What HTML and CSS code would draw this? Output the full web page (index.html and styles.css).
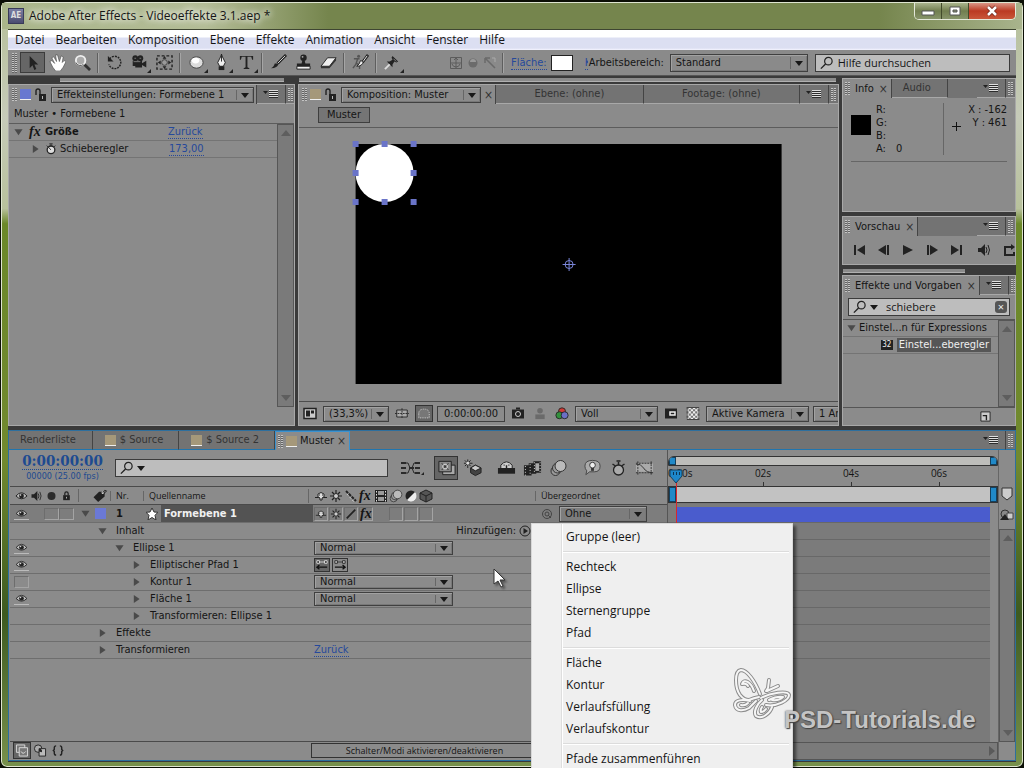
FILE: index.html
```html
<!DOCTYPE html>
<html lang="de">
<head>
    <meta charset="UTF-8">
    <meta name="viewport" content="width=device-width, initial-scale=1.0">
    <title>Adobe After Effects - Videoeffekte 3.1.aep *</title>
    <link rel="stylesheet" href="styles.css">
</head>
<body>
    <!-- Icon symbols -->
    <svg class="symbols" aria-hidden="true">
        <symbol id="i-arrow" viewBox="0 0 18 18"><path d="M6 2v13l3-3 2 5 2-1-2-5h4z" fill="#222"/></symbol>
        <symbol id="i-hand" viewBox="0 0 18 18"><path d="M1 8l2-1 3 3-3-6 2-1 3 5-1-7h2l2 7 2-6 2 1-1 6 2-2 2 1-3 6-3 4H7l-3-4z" fill="#fff" stroke="#444" stroke-width=".6"/></symbol>
        <symbol id="i-zoom" viewBox="0 0 18 18"><path d="M10 10l7 7" stroke="#333" stroke-width="3"/><circle cx="7" cy="7" r="5" fill="#aaa" stroke="#eee" stroke-width="2"/><path d="M2 9a5 5 0 0 0 8 2" fill="none" stroke="#555"/></symbol>
        <symbol id="i-rotate" viewBox="0 0 18 18"><path d="M4 5a6.500 6.500 0 1 1-1 6" fill="none" stroke="#222" stroke-width="1.500" stroke-dasharray="2 1"/><path d="M2 2v6h6z" fill="#222"/></symbol>
        <symbol id="i-camera" viewBox="0 0 20 18"><circle cx="5" cy="4" r="3.4" fill="#222"/><circle cx="11" cy="4" r="3.4" fill="#222"/><path d="M2 7h11v3l5-3v8l-5-3v3H5v-2H2z" fill="#222"/><path d="M3 8h8M4 4h2M10 4h2" stroke="#888"/></symbol>
        <symbol id="i-pan" viewBox="0 0 18 18"><rect x="1" y="2" width="16" height="14" fill="none" stroke="#222" stroke-width="1.500" stroke-dasharray="3 2"/><circle cx="9" cy="9" r="3" fill="#999" stroke="#444"/><path d="M9 2l2 3H7zM9 16l2-3H7zM2 9l3-2v4zM16 9l-3-2v4z" fill="#222"/></symbol>
        <symbol id="i-ellipse" viewBox="0 0 18 18"><ellipse cx="9" cy="9" rx="7" ry="6" fill="#ddd" stroke="#444"/><ellipse cx="8" cy="7" rx="4" ry="3" fill="#fff"/></symbol>
        <symbol id="i-pen" viewBox="0 0 18 18"><path d="M9 0l-1 8M9 0l1 8" stroke="#222"/><path d="M9 1l4 8-2 4H7L5 9z" fill="#eee" stroke="#222"/><path d="M9 2v6" stroke="#222"/><path d="M6 13h6v4H6z" fill="#222"/></symbol>
        <symbol id="i-type" viewBox="0 0 18 18"><path d="M2 2h14v4h-1l-1-3h-4v11l2 1v1H6v-1l2-1V3H4L3 6H2z" fill="#222"/></symbol>
        <symbol id="i-brush" viewBox="0 0 18 18"><path d="M17 1L8 10" stroke="#222" stroke-width="3"/><path d="M16 2l-8 8" stroke="#ddd"/><path d="M9 10q-1 5-8 5 3-1 4-5z" fill="#222"/></symbol>
        <symbol id="i-stamp" viewBox="0 0 18 18"><circle cx="9" cy="4" r="3.4" fill="#222"/><path d="M8 6h2l1 4h5v3H2v-3h5z" fill="#222"/><path d="M2 13h14v3H2z" fill="#eee" stroke="#222"/><circle cx="8" cy="3" r="1" fill="#aaa"/></symbol>
        <symbol id="i-eraser" viewBox="0 0 18 18"><path d="M8 4h9l-7 9H1z" fill="#eee" stroke="#222"/><path d="M1 13v2h9l7-8V4l-7 9z" fill="#333"/></symbol>
        <symbol id="i-roto" viewBox="0 0 18 18"><path d="M2 5h6M6 5l-2 6-3 4M5 10l3 2v4" stroke="#555" stroke-width="1.500" fill="none"/><circle cx="7" cy="2.500" r="1.600" fill="#555"/><path d="M17 1l-6 8" stroke="#222" stroke-width="3"/><path d="M16 2l-5 7" stroke="#eee"/><path d="M12 8q-1 5-7 5 3-2 4-6z" fill="#eee" stroke="#222"/></symbol>
        <symbol id="i-pin" viewBox="0 0 18 18"><path d="M9 2l6 6-2 1-2-1-2 3v3L3 8h3l3-2-1-2z" fill="#222"/><path d="M6 11l-5 5" stroke="#ddd" stroke-width="2"/><path d="M10 5l3 3" stroke="#888"/></symbol>
        <symbol id="i-anchor" viewBox="0 0 16 16"><path d="M2.500 2.500h11v11h-11zM8 3v10M3 8h10M4 9q1 3 4 3t4-3M6 5l2-2 2 2" fill="none" stroke="#5c5c5c"/></symbol>
        <symbol id="i-ball" viewBox="0 0 16 16"><circle cx="8" cy="8" r="4.500" fill="#6b6b6b"/><path d="M5 7a3 3 0 0 1 6 0z" fill="#999"/></symbol>
        <symbol id="i-axis" viewBox="0 0 16 16"><path d="M4 4l9 9M3 3h5M3 3v5" fill="none" stroke="#6a6a6a" stroke-width="1.500"/><path d="M10 3h3v4" fill="none" stroke="#aaa"/></symbol>
        <symbol id="i-search" viewBox="0 0 16 14"><circle cx="10" cy="5" r="4" fill="none" stroke="#222" stroke-width="1.3"/><path d="M7 8l-5 5" stroke="#222" stroke-width="1.500"/></symbol>
        <symbol id="i-lock-open" viewBox="0 0 14 14"><path d="M2 7V3q0-2 2-2t2 2v4" fill="none" stroke="#222" stroke-width="1.4"/><rect x="5" y="6" width="7" height="7" fill="#222"/><rect x="8" y="8" width="1" height="3" fill="#bbb"/></symbol>
        <symbol id="i-menu" viewBox="0 0 16 10"><path d="M0 2h5L2.500 5z" fill="#222"/><path d="M6 1.500h9M6 3.500h9M6 5.500h9M6 7.500h9" stroke="#dedede"/><path d="M6 2.500h9M6 4.500h9M6 6.500h9M6 8.500h9" stroke="#2c2c2c"/></symbol>
        <symbol id="i-watch" viewBox="0 0 14 14"><circle cx="7" cy="8" r="4.500" fill="#ddd" stroke="#222" stroke-width="1.500"/><path d="M7 8L4 5M5 1h4M7 1v3M2 3l2 2M12 3l-2 2" stroke="#222"/></symbol>
        <symbol id="i-eye" viewBox="0 0 14 10"><path d="M1 5q6-7 12 0-6 6-12 0z" fill="#bbb" stroke="#222"/><circle cx="7" cy="5" r="2.600" fill="#222"/><circle cx="6" cy="4" r=".8" fill="#eee"/></symbol>
        <symbol id="i-speaker" viewBox="0 0 14 12"><path d="M1 4h3l4-4v12L4 8H1z" fill="#222"/><path d="M9 3q2 3 0 6M11 1q3 5 0 10" fill="none" stroke="#222"/></symbol>
        <symbol id="i-dot" viewBox="0 0 10 10"><circle cx="5" cy="5" r="4" fill="#2c2c2c"/></symbol>
        <symbol id="i-lock" viewBox="0 0 10 12"><path d="M3 5V3q0-2 2-2t2 2v2" fill="none" stroke="#222" stroke-width="1.500"/><rect x="1" y="5" width="8" height="6" fill="#222"/><path d="M5 7v2" stroke="#ccc"/></symbol>
        <symbol id="i-tag" viewBox="0 0 16 14"><path d="M1 9l6-6h6v5l-7 6z" fill="#222"/><circle cx="11" cy="4" r="1.300" fill="#ddd"/><path d="M11 4q2-4 4-2-1 2-3 3" fill="none" stroke="#222"/></symbol>
        <symbol id="i-shy" viewBox="0 0 14 12"><path d="M1 7.500h12" stroke="#222"/><path d="M4 7V4q3-3 6 0v3l-2 1v2H6V8z" fill="#ddd" stroke="#222"/><path d="M5 5h1M8 5h1" stroke="#222"/></symbol>
        <symbol id="i-sun" viewBox="0 0 14 14"><circle cx="7" cy="7" r="2.500" fill="#ccc" stroke="#222"/><path d="M7 1v3M7 10v3M1 7h3M10 7h3M3 3l2 2M9 9l2 2M11 3L9 5M5 9l-2 2" stroke="#222" stroke-width="1.200"/></symbol>
        <symbol id="i-quality" viewBox="0 0 14 14"><path d="M2 2l10 10" stroke="#222" stroke-width="2" stroke-dasharray="3 1"/><path d="M3 5l7 8" stroke="#ccc" stroke-dasharray="2 2"/></symbol>
        <symbol id="i-slash" viewBox="0 0 14 14"><path d="M2 12L12 2" stroke="#222" stroke-width="2"/></symbol>
        <symbol id="i-film" viewBox="0 0 14 14"><path d="M1 1h12v12H1z" fill="#222"/><path d="M4 2h6v4H4zM4 8h6v4H4z" fill="#999"/><path d="M2.500 2v11M11.500 2v11" stroke="#ddd" stroke-dasharray="1.500 1.500"/></symbol>
        <symbol id="i-blur" viewBox="0 0 18 18"><circle cx="6" cy="12" r="4.500" fill="#999" stroke="#333"/><circle cx="8" cy="9" r="5" fill="#999" stroke="#333"/><circle cx="11" cy="7" r="5.500" fill="#bbb" stroke="#333"/></symbol>
        <symbol id="i-half" viewBox="0 0 14 14"><circle cx="7" cy="7" r="5.500" fill="#222"/><path d="M11 3a5.500 5.500 0 0 1-8 8z" fill="#eee"/></symbol>
        <symbol id="i-cube" viewBox="0 0 14 14"><path d="M7 1l6 3v6l-6 3-6-3V4z" fill="#555" stroke="#222"/><path d="M1 4l6 3 6-3M7 7v6" fill="none" stroke="#222"/></symbol>
        <symbol id="i-flow" viewBox="0 0 24 14"><path d="M1 1h5v2H1zM1 6h5v2H1zM1 11h5v2H1zM15 1h5v2h-5zM15 6h5v2h-5zM15 11h5v2h-5z" fill="#2a2a2a"/><path d="M6 2h2l2 5-2 5H6M15 2h-1l-2 5 2 5h1" stroke="#2a2a2a" fill="none"/><path d="M9 6h5v2H9z" fill="#2a2a2a"/><path d="M21 14h3v-3z" fill="#222"/></symbol>
        <symbol id="i-live" viewBox="0 0 20 18"><path d="M6 6h13v10H6z" fill="#aaa" stroke="#222"/><path d="M2 2h13v11H2z" fill="#888" stroke="#222"/><path d="M5 4l7 7M12 4l-7 7" stroke="#222"/><circle cx="8.500" cy="7.500" r="2.500" fill="none" stroke="#ddd"/></symbol>
        <symbol id="i-draft" viewBox="0 0 20 18"><path d="M13 6l6 3v5l-6 3-5-3V9z" fill="#444" stroke="#222"/><path d="M8 9l5 3 6-3-6-3z" fill="#ccc" stroke="#222"/><path d="M5 0v9M1 4h9M2 1l6 6M8 1L2 7" stroke="#222"/><circle cx="5" cy="4" r="1.500" fill="#ddd"/></symbol>
        <symbol id="i-shyman" viewBox="0 0 20 18"><path d="M1 9h18v6H1z" fill="#222"/><path d="M4 9V6q6-7 12 0v3" fill="#ccc" stroke="#222"/><path d="M10 6v5M7 6h1M12 6h1" stroke="#222" stroke-width="1.500"/></symbol>
        <symbol id="i-frames" viewBox="0 0 20 18"><path d="M1 6h8v11H1zM6 4h8v11H6zM11 2h8v12h-8z" fill="#222"/><path d="M13 4h4v8h-4z" fill="#aaa"/><path d="M2.500 7v10M7.500 5v10M12 3v11M18 3v11" stroke="#ddd" stroke-dasharray="1 2"/></symbol>
        <symbol id="i-brain" viewBox="0 0 20 18"><path d="M2 7q0-6 8-6t8 6-6 6H7L3 16l1-4Q2 10 2 7z" fill="#aaa" stroke="#444"/><circle cx="10" cy="6" r="3" fill="#eee" stroke="#333"/><path d="M8.500 9h3v3h-3z" fill="#333"/></symbol>
        <symbol id="i-autokey" viewBox="0 0 16 18"><circle cx="8" cy="11" r="5" fill="#aaa" stroke="#222" stroke-width="1.300"/><path d="M8 3v3M6 2h4M2 5l3 2M14 5l-3 2" stroke="#222" stroke-width="1.500"/></symbol>
        <symbol id="i-graph" viewBox="0 0 20 16"><path d="M1 3h18v9H1z" fill="#aaa"/><path d="M1 3h18M1 13h18M3 1v14M17 1v14" stroke="#333" stroke-dasharray="2 1"/><path d="M1 4q5-1 8 4t10 5" fill="none" stroke="#333"/></symbol>
        <symbol id="i-star" viewBox="0 0 12 12"><path d="M6 0l2 4 4 .3-3 3L10 12 6 9.500 2 12l1-4.700-3-3L4 4z" fill="#fff" stroke="#333"/></symbol>
        <symbol id="i-swirl" viewBox="0 0 12 12"><circle cx="6" cy="6" r="4.500" fill="none" stroke="#444"/><circle cx="6" cy="6" r="2" fill="none" stroke="#444"/><path d="M7 7l3 3" stroke="#444"/></symbol>
        <symbol id="i-play" viewBox="0 0 12 12"><circle cx="6" cy="6" r="5" fill="none" stroke="#222"/><path d="M4.500 3v6L9 6z" fill="#222"/></symbol>
        <symbol id="i-path-l" viewBox="0 0 16 14"><path d="M4 3.500h8" stroke="#ddd"/><path d="M2 9.500h12M5 7L2 9.500 5 12" fill="none" stroke="#111" stroke-width="1.500"/><path d="M2 2h3v3H2zM11 2h3v3h-3z" fill="#222" stroke="#eee"/></symbol>
        <symbol id="i-path-r" viewBox="0 0 16 14"><path d="M4 3.500h8" stroke="#333"/><path d="M2 9.500h12M11 7l3 2.500L11 12" fill="none" stroke="#111" stroke-width="1.500"/><path d="M2 2h3v3H2zM11 2h3v3h-3z" fill="#ccc" stroke="#222"/></symbol>
        <symbol id="i-first" viewBox="0 0 14 12"><path d="M2 1v10" stroke="#222" stroke-width="2"/><path d="M12 1v10L4 6z" fill="#222"/></symbol>
        <symbol id="i-back" viewBox="0 0 14 12"><path d="M11 1v10" stroke="#222" stroke-width="2"/><path d="M9 1v10L1 6z" fill="#222"/></symbol>
        <symbol id="i-run" viewBox="0 0 14 12"><path d="M2 1v10l10-5z" fill="#222"/></symbol>
        <symbol id="i-loop" viewBox="0 0 14 12"><path d="M9 3H2v8h9V8" fill="none" stroke="#222" stroke-width="2"/><path d="M8 0v6l4-3z" fill="#222"/></symbol>
        <symbol id="i-new" viewBox="0 0 12 12"><path d="M1 1h10v10H1z" fill="#ccc" stroke="#222"/><path d="M3 5h4v5" fill="none" stroke="#222" stroke-width="1.500"/></symbol>
        <symbol id="i-magnify" viewBox="0 0 14 12"><path d="M1 1h12v10H1z" fill="#ccc" stroke="#222" stroke-width="1.500"/><path d="M3 3h4v6H3zM8 3h3v3H8z" fill="#222"/></symbol>
        <symbol id="i-guides" viewBox="0 0 16 12"><path d="M2 2h12v8H2z" fill="#aaa" stroke="#222"/><path d="M8 0v12M0 6h16" stroke="#222" stroke-dasharray="2 1"/></symbol>
        <symbol id="i-mask" viewBox="0 0 16 12"><path d="M2 6q0-5 6-5t6 5v5H2z" fill="#777" stroke="#ddd" stroke-dasharray="1 1"/></symbol>
        <symbol id="i-snap" viewBox="0 0 14 12"><path d="M1 2h12v9H1z" fill="#222"/><circle cx="7" cy="6.500" r="2.500" fill="#222" stroke="#ccc"/><path d="M5 0h4v2H5z" fill="#222"/></symbol>
        <symbol id="i-person" viewBox="0 0 12 14"><circle cx="6" cy="4" r="3" fill="#6a6a6a"/><path d="M1 8h10v5H1z" fill="#6a6a6a"/></symbol>
        <symbol id="i-rgb" viewBox="0 0 16 14"><circle cx="8" cy="4.500" r="4" fill="#d03a35" stroke="#222"/><circle cx="5" cy="9" r="4" fill="#33903d" stroke="#222"/><circle cx="11" cy="9" r="4" fill="#6b6fc5" stroke="#222"/></symbol>
        <symbol id="i-region" viewBox="0 0 14 12"><path d="M1 1h12v10H1z" fill="#222"/><path d="M6 4.500h5v3H6z" fill="#222" stroke="#eee" stroke-width="1.500"/></symbol>
        <symbol id="i-alpha" viewBox="0 0 12 12"><path d="M0 0h12v12H0z" fill="#eee"/><path d="M0 1h12M0 5h12M0 9h12" stroke="#777" stroke-width="2" stroke-dasharray="2 2"/><path d="M2 3h10M2 7h10M2 11h10" stroke="#777" stroke-width="2" stroke-dasharray="2 2"/><path d="M.5.500h11v11H.5z" fill="none" stroke="#444"/></symbol>
        <symbol id="i-marker" viewBox="0 0 12 14"><path d="M1 1h10v8l-5 4-5-4z" fill="#ccc" stroke="#333"/></symbol>
        <symbol id="i-comp" viewBox="0 0 14 14"><circle cx="5" cy="6" r="4" fill="#888" stroke="#333"/><path d="M7 5h6v6H7z" fill="#ccc" stroke="#444"/><path d="M0 12l5-6 4 6z" fill="#222"/></symbol>
        <symbol id="i-stack" viewBox="0 0 14 14"><path d="M1 1h9v8H1z" fill="#777" stroke="#ddd"/><path d="M4 4h9v9H4z" fill="#777" stroke="#ddd"/><path d="M6 8q2 4 5 0" fill="none" stroke="#ddd"/></symbol>
        <symbol id="i-modes" viewBox="0 0 14 14"><circle cx="5" cy="5" r="4" fill="#aaa" stroke="#222"/><path d="M6 5h7v8H6z" fill="#bbb" stroke="#222"/><path d="M6 5q4 0 3 4l-3-1z" fill="#222"/></symbol>
        <symbol id="i-braces" viewBox="0 0 14 14"><path d="M5 2q-2 0-2 2v2L2 7l1 1v2q0 2 2 2M9 2q2 0 2 2v2l1 1-1 1v2q0 2-2 2" fill="none" stroke="#222" stroke-width="1.500"/></symbol>
    </svg>

    <div class="window">
        <header class="titlebar">
            <span class="app-icon">AE</span>
            <h1>Adobe After Effects - Videoeffekte 3.1.aep *</h1>
            <div class="window-buttons">
                <button type="button" aria-label="Minimieren"><svg viewBox="0 0 14 12"><path d="M1 6h12v4H1z" fill="#fff" stroke="#555"/></svg></button>
                <button type="button" aria-label="Maximieren"><svg viewBox="0 0 14 12"><path d="M2 2h10v8H2z" fill="#fff" stroke="#555"/><path d="M5 5h4v2H5z" fill="#8a9372" stroke="#555"/></svg></button>
                <button type="button" class="close" aria-label="Schließen"><svg viewBox="0 0 14 12"><path d="M3 2l8 8M11 2l-8 8" stroke="#6b2418" stroke-width="4"/><path d="M3 2l8 8M11 2l-8 8" stroke="#fff" stroke-width="2.500"/></svg></button>
            </div>
        </header>

        <div class="client">
            <nav class="menubar">
                <a href="#">Datei</a>
                <a href="#">Bearbeiten</a>
                <a href="#">Komposition</a>
                <a href="#">Ebene</a>
                <a href="#">Effekte</a>
                <a href="#">Animation</a>
                <a href="#">Ansicht</a>
                <a href="#">Fenster</a>
                <a href="#">Hilfe</a>
            </nav>

            <div class="toolbar">
                <span class="grip"></span>
                <button type="button" class="tool active" aria-label="Auswahl"><svg><use href="#i-arrow"/></svg></button>
                <button type="button" class="tool" aria-label="Hand"><svg><use href="#i-hand"/></svg></button>
                <button type="button" class="tool" aria-label="Zoom"><svg><use href="#i-zoom"/></svg></button>
                <span class="tool-sep"></span>
                <button type="button" class="tool" aria-label="Drehen"><svg><use href="#i-rotate"/></svg></button>
                <button type="button" class="tool more" aria-label="Kamera"><svg><use href="#i-camera"/></svg></button>
                <button type="button" class="tool" aria-label="Ausschnitt"><svg><use href="#i-pan"/></svg></button>
                <span class="tool-sep"></span>
                <button type="button" class="tool more" aria-label="Ellipse"><svg><use href="#i-ellipse"/></svg></button>
                <button type="button" class="tool more" aria-label="Zeichenstift"><svg><use href="#i-pen"/></svg></button>
                <button type="button" class="tool more" aria-label="Text"><svg><use href="#i-type"/></svg></button>
                <span class="tool-sep"></span>
                <button type="button" class="tool" aria-label="Pinsel"><svg><use href="#i-brush"/></svg></button>
                <button type="button" class="tool" aria-label="Kopierstempel"><svg><use href="#i-stamp"/></svg></button>
                <button type="button" class="tool" aria-label="Radiergummi"><svg><use href="#i-eraser"/></svg></button>
                <span class="tool-sep"></span>
                <button type="button" class="tool" aria-label="Roto-Pinsel"><svg><use href="#i-roto"/></svg></button>
                <span class="tool-sep"></span>
                <button type="button" class="tool more" aria-label="Marionette"><svg><use href="#i-pin"/></svg></button>
                <div class="axis-tools">
                    <svg><use href="#i-anchor"/></svg>
                    <svg><use href="#i-ball"/></svg>
                    <svg><use href="#i-axis"/></svg>
                </div>
                <span class="tool-sep"></span>
                <a href="#" class="link">Fläche:</a>
                <button type="button" class="fill-color" aria-label="Flächenfarbe"></button>
                <a href="#" class="link cut">Kontur:</a>
                <label for="workspace">Arbeitsbereich:</label>
                <span class="select workspace">
                    <select id="workspace"><option>Standard</option></select>
                </span>
                <div class="search help-search">
                    <svg><use href="#i-search"/></svg>
                    <input type="text" aria-label="Hilfe durchsuchen" value="Hilfe durchsuchen">
                </div>
            </div>

            <main class="upper">
                <!-- Effect controls -->
                <section class="column">
                    <div class="strip strip-left"></div>
                    <div class="panel">
                        <div class="tabs">
                            <div class="tab current">
                                <span class="grip"></span>
                                <span class="chip blue"></span>
                                <svg class="lock"><use href="#i-lock-open"/></svg>
                                <span class="select effect-select">
                                    <select aria-label="Effekteinstellungen"><option>Effekteinstellungen: Formebene 1</option></select>
                                </span>
                            </div>
                            <button type="button" class="panel-menu" aria-label="Menü"><svg><use href="#i-menu"/></svg></button>
                            <span class="tab-end"><span class="grip"></span></span>
                        </div>
                        <p class="source-line">Muster • Formebene 1</p>
                        <div class="effect-body">
                            <div class="effect-list">
                                <div class="effect-row">
                                    <span class="twirl open"></span>
                                    <i class="fx">fx</i>
                                    <b>Größe</b>
                                    <a href="#" class="link">Zurück</a>
                                </div>
                                <div class="effect-row child">
                                    <span class="twirl"></span>
                                    <svg><use href="#i-watch"/></svg>
                                    <span class="effect-name">Schieberegler</span>
                                    <a href="#" class="link">173,00</a>
                                </div>
                            </div>
                            <div class="scrollbar"></div>
                        </div>
                    </div>
                </section>

                <!-- Composition viewer -->
                <section class="column">
                    <div class="strip"></div>
                    <div class="panel">
                        <div class="tabs">
                            <div class="tab current">
                                <span class="grip"></span>
                                <span class="chip sand"></span>
                                <svg class="lock"><use href="#i-lock-open"/></svg>
                                <span class="select comp-select">
                                    <select aria-label="Komposition"><option>Komposition: Muster</option></select>
                                </span>
                                <button type="button" class="tab-close" aria-label="Schließen">×</button>
                            </div>
                            <button type="button" class="tab wide">Ebene: (ohne)</button>
                            <button type="button" class="tab wide">Footage: (ohne)</button>
                            <button type="button" class="panel-menu" aria-label="Menü"><svg><use href="#i-menu"/></svg></button>
                            <span class="tab-end"><span class="grip"></span></span>
                        </div>
                        <div class="crumbs"><button type="button">Muster</button></div>
                        <div class="viewer">
                            <svg viewBox="0 0 426 240">
                                <rect width="426" height="240" fill="#000"/>
                                <circle cx="29" cy="29" r="29" fill="#fff"/>
                                <g fill="#6a74c8">
                                    <rect x="-3" y="-3" width="6" height="6"/><rect x="26" y="-3" width="6" height="6"/><rect x="55" y="-3" width="6" height="6"/>
                                    <rect x="-3" y="26" width="6" height="6"/><rect x="55" y="26" width="6" height="6"/>
                                    <rect x="-3" y="55" width="6" height="6"/><rect x="26" y="55" width="6" height="6"/><rect x="55" y="55" width="6" height="6"/>
                                </g>
                                <g fill="none" stroke="#7a85d8"><circle cx="213.500" cy="120.500" r="4"/><path d="M213.500 114v13M207 120.500h13"/></g>
                            </svg>
                        </div>
                        <div class="viewer-bar">
                            <button type="button" class="icon-button" aria-label="Vorschau"><svg><use href="#i-magnify"/></svg></button>
                            <span class="select zoom-select"><select aria-label="Zoom"><option>(33,3%)</option></select></span>
                            <button type="button" class="icon-button" aria-label="Hilfslinien"><svg><use href="#i-guides"/></svg></button>
                            <button type="button" class="icon-button pressed" aria-label="Masken"><svg><use href="#i-mask"/></svg></button>
                            <button type="button" class="time-button">0:00:00:00</button>
                            <button type="button" class="icon-button" aria-label="Schnappschuss"><svg><use href="#i-snap"/></svg></button>
                            <button type="button" class="icon-button" aria-label="Schnappschuss anzeigen"><svg><use href="#i-person"/></svg></button>
                            <button type="button" class="icon-button" aria-label="Kanäle"><svg><use href="#i-rgb"/></svg></button>
                            <span class="select quality-select"><select aria-label="Auflösung"><option>Voll</option></select></span>
                            <button type="button" class="icon-button" aria-label="Bereich"><svg><use href="#i-region"/></svg></button>
                            <button type="button" class="icon-button" aria-label="Transparenz"><svg><use href="#i-alpha"/></svg></button>
                            <span class="select camera-select"><select aria-label="Kamera"><option>Aktive Kamera</option></select></span>
                            <span class="select views-select"><select aria-label="Ansichten"><option>1 Ansicht</option></select></span>
                        </div>
                    </div>
                </section>

                <aside class="side">
                    <!-- Info -->
                    <section class="panel info">
                        <div class="tabs">
                            <button type="button" class="tab current"><span class="grip"></span>Info <span class="x">×</span></button>
                            <button type="button" class="tab audio">Audio</button>
                            <button type="button" class="panel-menu" aria-label="Menü"><svg><use href="#i-menu"/></svg></button>
                            <span class="tab-end"><span class="grip"></span></span>
                        </div>
                        <div class="info-body">
                            <span class="info-color"></span>
                            <dl class="channels">
                                <dt>R:</dt><dd></dd>
                                <dt>G:</dt><dd></dd>
                                <dt>B:</dt><dd></dd>
                                <dt>A:</dt><dd>0</dd>
                            </dl>
                            <svg class="cross" viewBox="0 0 9 9"><path d="M4.500 0v9M0 4.500h9" stroke="#111"/></svg>
                            <p class="coords">X : -162<br>Y : 461</p>
                        </div>
                    </section>

                    <!-- Preview -->
                    <section class="panel">
                        <div class="tabs">
                            <button type="button" class="tab current"><span class="grip"></span>Vorschau <span class="x">×</span></button>
                            <button type="button" class="panel-menu" aria-label="Menü"><svg><use href="#i-menu"/></svg></button>
                            <span class="tab-end"><span class="grip"></span></span>
                        </div>
                        <div class="transport">
                            <button type="button" aria-label="Erster Frame"><svg><use href="#i-first"/></svg></button>
                            <button type="button" aria-label="Zurück"><svg><use href="#i-back"/></svg></button>
                            <button type="button" aria-label="Abspielen"><svg><use href="#i-run"/></svg></button>
                            <button type="button" class="flip" aria-label="Vor"><svg><use href="#i-back"/></svg></button>
                            <button type="button" class="flip" aria-label="Letzter Frame"><svg><use href="#i-first"/></svg></button>
                            <button type="button" class="sound" aria-label="Ton"><svg><use href="#i-speaker"/></svg></button>
                            <button type="button" aria-label="Schleife"><svg><use href="#i-loop"/></svg></button>
                        </div>
                    </section>
                    <div class="strip strip-side"></div>

                    <!-- Effects and presets -->
                    <section class="panel presets">
                        <div class="tabs">
                            <button type="button" class="tab current"><span class="grip"></span>Effekte und Vorgaben <span class="x">×</span></button>
                            <button type="button" class="panel-menu" aria-label="Menü"><svg><use href="#i-menu"/></svg></button>
                            <span class="tab-end"><span class="grip"></span></span>
                        </div>
                        <div class="search preset-search">
                            <svg><use href="#i-search"/></svg>
                            <span class="down"></span>
                            <input type="text" aria-label="Effekte suchen" value="schiebere">
                            <button type="button" class="clear" aria-label="Löschen">×</button>
                        </div>
                        <div class="preset-body">
                            <div class="preset-list">
                                <div class="preset-row"><span class="twirl open"></span>Einstel...n für Expressions</div>
                                <div class="preset-row selected"><span class="bit-icon">32</span><span class="preset-name">Einstel...eberegler</span></div>
                            </div>
                            <div class="scrollbar"></div>
                        </div>
                        <div class="preset-foot"><svg><use href="#i-new"/></svg></div>
                    </section>
                </aside>
            </main>

            <!-- Timeline -->
            <section class="timeline">
                <div class="tabs timeline-tabs">
                    <button type="button" class="tab queue">Renderliste</button>
                    <button type="button" class="tab source"><span class="chip sand"></span>$ Source</button>
                    <button type="button" class="tab source"><span class="chip sand"></span>$ Source 2</button>
                    <button type="button" class="tab current"><span class="grip"></span><span class="chip sand"></span>Muster <span class="x">×</span></button>
                    <button type="button" class="panel-menu" aria-label="Menü"><svg><use href="#i-menu"/></svg></button>
                    <span class="tab-end"><span class="grip"></span></span>
                </div>

                <div class="timeline-body">
                    <div class="outline">
                        <div class="outline-head">
                            <div class="timecode">
                                <a href="#">0:00:00:00</a>
                                <small>00000 (25.00 fps)</small>
                            </div>
                            <div class="search layer-search">
                                <svg><use href="#i-search"/></svg>
                                <span class="down"></span>
                                <input type="text" aria-label="Ebenen suchen">
                            </div>
                            <div class="comp-switches">
                                <button type="button" class="flow" aria-label="Flussdiagramm"><svg><use href="#i-flow"/></svg></button>
                                <button type="button" class="pressed" aria-label="Live-Aktualisierung"><svg><use href="#i-live"/></svg></button>
                                <button type="button" aria-label="3D-Entwurf"><svg><use href="#i-draft"/></svg></button>
                                <button type="button" class="spaced" aria-label="Tarnen"><svg><use href="#i-shyman"/></svg></button>
                                <button type="button" aria-label="Frame-Überblendung"><svg><use href="#i-frames"/></svg></button>
                                <button type="button" aria-label="Bewegungsunschärfe"><svg><use href="#i-blur"/></svg></button>
                                <button type="button" class="spaced" aria-label="Brainstorming"><svg><use href="#i-brain"/></svg></button>
                                <button type="button" aria-label="Auto-Keyframe"><svg><use href="#i-autokey"/></svg></button>
                                <button type="button" aria-label="Diagrammeditor"><svg><use href="#i-graph"/></svg></button>
                            </div>
                        </div>

                        <div class="row layer-grid column-head">
                            <span class="av"><svg><use href="#i-eye"/></svg><svg><use href="#i-speaker"/></svg><svg><use href="#i-dot"/></svg><svg><use href="#i-lock"/></svg></span>
                            <span class="label-cell"><svg><use href="#i-tag"/></svg></span>
                            <span>Nr.</span>
                            <span>Quellenname</span>
                            <span class="switches"><svg><use href="#i-shy"/></svg><svg><use href="#i-sun"/></svg><svg><use href="#i-quality"/></svg><i class="fx">fx</i><svg><use href="#i-film"/></svg><svg><use href="#i-blur"/></svg><svg><use href="#i-half"/></svg><svg><use href="#i-cube"/></svg></span>
                            <span class="parent-head">Übergeordnet</span>
                        </div>
                        <div class="row layer-grid layer-row">
                            <span class="av"><svg class="eye"><use href="#i-eye"/></svg><span class="gap"></span><span class="box"></span><span class="box"></span></span>
                            <span class="label-cell"><span class="twirl open"></span><span class="label-color"></span></span>
                            <b class="number">1</b>
                            <span class="layer-name"><svg><use href="#i-star"/></svg><b>Formebene 1</b></span>
                            <span class="switches"><svg class="box"><use href="#i-shy"/></svg><svg class="box"><use href="#i-sun"/></svg><svg class="box"><use href="#i-slash"/></svg><i class="fx box">fx</i><span class="gap"></span><span class="box"></span><span class="box"></span><span class="box"></span></span>
                            <span class="parent"><svg><use href="#i-swirl"/></svg><span class="select parent-select"><select aria-label="Übergeordnet"><option>Ohne</option></select></span></span>
                        </div>
                        <div class="row tree-grid">
                            <span></span>
                            <span class="depth-1"><span class="twirl open"></span>Inhalt</span>
                            <span class="add">Hinzufügen: <button type="button" aria-label="Hinzufügen"><svg><use href="#i-play"/></svg></button></span>
                        </div>
                        <div class="row tree-grid">
                            <span class="av"><svg class="eye"><use href="#i-eye"/></svg></span>
                            <span class="depth-2"><span class="twirl open"></span>Ellipse 1</span>
                            <span class="mode"><span class="select"><select aria-label="Modus Ellipse 1"><option>Normal</option></select></span></span>
                        </div>
                        <div class="row tree-grid">
                            <span class="av"><svg class="eye"><use href="#i-eye"/></svg></span>
                            <span class="depth-3"><span class="twirl"></span>Elliptischer Pfad 1</span>
                            <span class="mode path-buttons"><button type="button" class="pressed" aria-label="Pfad umkehren"><svg><use href="#i-path-l"/></svg></button><button type="button" aria-label="Pfadrichtung"><svg><use href="#i-path-r"/></svg></button></span>
                        </div>
                        <div class="row tree-grid">
                            <span class="av"><span class="box"></span></span>
                            <span class="depth-3"><span class="twirl"></span>Kontur 1</span>
                            <span class="mode"><span class="select"><select aria-label="Modus Kontur 1"><option>Normal</option></select></span></span>
                        </div>
                        <div class="row tree-grid">
                            <span class="av"><svg class="eye"><use href="#i-eye"/></svg></span>
                            <span class="depth-3"><span class="twirl"></span>Fläche 1</span>
                            <span class="mode"><span class="select"><select aria-label="Modus Fläche 1"><option>Normal</option></select></span></span>
                        </div>
                        <div class="row tree-grid">
                            <span></span>
                            <span class="depth-3"><span class="twirl"></span>Transformieren: Ellipse 1</span>
                        </div>
                        <div class="row tree-grid">
                            <span></span>
                            <span class="depth-1"><span class="twirl"></span>Effekte</span>
                        </div>
                        <div class="row tree-grid">
                            <span></span>
                            <span class="depth-1"><span class="twirl"></span>Transformieren</span>
                            <span class="mode"><a href="#" class="link">Zurück</a></span>
                        </div>
                        <div class="outline-foot">
                            <button type="button" class="icon-button pressed" aria-label="Schalter"><svg><use href="#i-stack"/></svg></button>
                            <button type="button" class="icon-button" aria-label="Modi"><svg><use href="#i-modes"/></svg></button>
                            <button type="button" class="icon-button" aria-label="In/Out"><svg><use href="#i-braces"/></svg></button>
                            <button type="button" class="toggle-modes">Schalter/Modi aktivieren/deaktivieren</button>
                        </div>
                    </div>

                    <div class="time-area">
                        <div class="tracks-column">
                            <div class="navigator"><span></span><span></span></div>
                            <div class="ruler">
                                <span>0:00s</span>
                                <span>02s</span>
                                <span>04s</span>
                                <span>06s</span>
                            </div>
                            <div class="work-area"><span></span><span></span></div>
                            <div class="track bar-track"><div class="layer-bar"></div></div>
                            <div class="track"></div>
                            <div class="track"></div>
                            <div class="track"></div>
                            <div class="track"></div>
                            <div class="track"></div>
                            <div class="track"></div>
                            <div class="track"></div>
                            <div class="track"></div>
                            <div class="track-rest"></div>
                            <div class="hscroll"></div>
                            <svg class="playhead" viewBox="0 0 14 54"><path d="M7.500 12v42" stroke="#d8262c"/><path d="M1 1h12v6l-6 7-6-7z" fill="#1d87c9" stroke="#14405e"/><path d="M4.500 3v3M7.500 3v3M10.500 3v3" stroke="#0e3450"/></svg>
                        </div>
                        <div class="time-side">
                            <svg><use href="#i-marker"/></svg>
                            <svg><use href="#i-comp"/></svg>
                            <div class="scrollbar"></div>
                        </div>
                    </div>
                </div>
            </section>
        </div>
    </div>

    <!-- Add menu -->
    <ul class="popup">
        <li><button type="button">Gruppe (leer)</button></li>
        <li class="divider"><button type="button">Rechteck</button></li>
        <li><button type="button">Ellipse</button></li>
        <li><button type="button">Sternengruppe</button></li>
        <li><button type="button">Pfad</button></li>
        <li class="divider"><button type="button">Fläche</button></li>
        <li><button type="button">Kontur</button></li>
        <li><button type="button">Verlaufsfüllung</button></li>
        <li><button type="button">Verlaufskontur</button></li>
        <li class="divider"><button type="button">Pfade zusammenführen</button></li>
    </ul>

    <svg class="cursor" viewBox="0 0 14 20"><path d="M1 1v15l4-3 3 6 2-1-3-6h5z" fill="#fff" stroke="#333"/></svg>

    <div class="watermark">
        <svg viewBox="0 0 60 52">
            <defs>
                <g id="butterfly">
                    <path d="M27 26C22 13 14 2 8 2 1 3 2 20 7 27q4 5 9 5 5-2 10-3"/>
                    <path d="M9 16c2-6 9-2 12 7M9 16q5-1 6 2"/>
                    <path d="M17 33C9 31 2 32 2 37c1 7 9 6 14 3l7-7"/>
                    <path d="M8 37q4 1 7-2"/>
                    <path d="M28 30c9-5 27-8 28-3 0 5-12 12-23 10"/>
                    <path d="M36 32q8-4 14-3-4 4-11 3"/>
                    <path d="M29 32c-5 4-9 12-6 16 6 4 14-3 16-9"/>
                    <path d="M29 39q-2 3-1 5 3 0 5-3"/>
                    <path d="M33 23l2-3 1-8M34 23l11-5"/>
                </g>
            </defs>
            <use href="#butterfly" class="wing-edge"/>
            <use href="#butterfly" class="wing-line"/>
        </svg>
        <span>PSD-Tutorials.de</span>
    </div>
</body>
</html>
```
FILE: styles.css
```css
/* Basic reset */
* {
    margin: 0;
    padding: 0;
    box-sizing: border-box;
}

body {
    height: 100vh;
    overflow: hidden;
    background: #0c0f06;
    color: #151515;
    font-family: "DejaVu Sans Condensed", "DejaVu Sans", sans-serif;
    font-size: 11px;
    line-height: 16px;
}

.symbols {
    display: none;
}

button,
input,
select {
    font: inherit;
    color: inherit;
    background: none;
    border: 0;
    border-radius: 0;
    outline: 0;
}

svg {
    display: block;
    flex: none;
}

a {
    color: inherit;
    text-decoration: none;
}

/* Window frame */
.window {
    display: flex;
    flex-direction: column;
    height: 100vh;
    padding: 0 7px 5px;
    border: 1px solid #0c0f06;
    border-top-width: 2px;
    border-radius: 7px;
    background: linear-gradient(#b5bf98, #c6cbb9 15%, #b8c19c 27%, #6b8829 29%, #71892f 60%, #3d5a20 80%, #78914c);
    box-shadow: inset 0 0 0 1px #dfe5d0;
}

.titlebar {
    display: flex;
    flex: none;
    align-items: center;
    height: 26px;
    margin: 1px -6px 0;
    padding: 0 6px;
    background: linear-gradient(90deg, #a9b58a, #b4bd97 20%, #75854d 32%, #75854d 86%, #a9b48d);
}

.app-icon {
    width: 16px;
    height: 16px;
    margin-right: 5px;
    border: 1px solid #383a58;
    background: linear-gradient(#7c80a4, #4a4c70);
    color: #ddd;
    font-size: 8px;
    font-weight: bold;
    line-height: 14px;
    text-align: center;
}

.titlebar h1 {
    flex: 1;
    font-family: "Open Sans", sans-serif;
    font-size: 12px;
    font-weight: normal;
    line-height: 14px;
    text-shadow: 0 0 6px #fff, 0 0 8px #fff;
}

.window-buttons {
    display: flex;
    align-self: flex-start;
    border: 1px solid #e4e8da;
    border-top: 0;
    border-radius: 0 0 5px 5px;
    overflow: hidden;
}

.window-buttons button {
    display: grid;
    place-items: center;
    width: 27px;
    height: 16px;
    border-right: 1px solid #424b2b;
    background: linear-gradient(#a9b48c, #717e4f 50%, #87946a);
}

.window-buttons svg {
    width: 14px;
    height: 12px;
}

.window-buttons .close {
    width: 46px;
    border: 0;
    background: linear-gradient(#d99585, #bb3a22 50%, #c95639);
}

.client {
    display: grid;
    flex: 1;
    grid-template-rows: auto auto minmax(0, 354fr) minmax(0, 332fr);
    min-height: 0;
    background: #3a3a3a;
}

/* Menu bar */
.menubar {
    display: flex;
    align-items: center;
    gap: 11px;
    height: 21px;
    padding: 0 7px;
    border-top: 1px solid #3f4632;
    background: linear-gradient(#fff 35%, #dcdff2 40%, #dcdff2 90%, #f5f5ff);
    font-family: "Open Sans", sans-serif;
    font-size: 12px;
}

/* Toolbar */
.toolbar {
    display: flex;
    align-items: center;
    height: 26px;
    padding: 0 6px 0 4px;
    border-bottom: 1px solid #555;
    background: #8a8a8a;
    white-space: nowrap;
}

.grip {
    flex: none;
    width: 5px;
    height: 13px;
    background:
        linear-gradient(90deg, transparent 2px, #858585 2px 3px, transparent 3px),
        repeating-linear-gradient(#c4c4c4 0 1px, #636363 1px 2px);
}

.toolbar .grip {
    height: 20px;
    margin-right: 3px;
}

.tool {
    display: grid;
    place-items: center;
    position: relative;
    flex: none;
    width: 25px;
    height: 21px;
}

.tool svg {
    width: 17px;
    height: 17px;
}

.tool.active {
    border: 1px solid #3c3c3c;
    background: #666;
}

.tool.more::after {
    content: "";
    position: absolute;
    right: 1px;
    bottom: 0;
    border-left: 4px solid transparent;
    border-bottom: 4px solid #222;
}

.tool-sep {
    flex: none;
    width: 2px;
    height: 20px;
    margin: 0 3px 0 2px;
    border-left: 1px solid #5e5e5e;
    border-right: 1px solid #a5a5a5;
}

.axis-tools {
    display: flex;
    gap: 1px;
    margin-left: 43px;
    margin-right: 2px;
}

.axis-tools svg {
    width: 16px;
    height: 16px;
}

.link {
    color: #26499b;
    line-height: 13px;
    border-bottom: 1px dotted #26499b;
}

.toolbar .link {
    margin-left: 4px;
}

.fill-color {
    width: 22px;
    height: 16px;
    margin: 0 8px 0 4px;
    border: 1px solid #222;
    background: #fff;
}

.toolbar .cut {
    width: 3px;
    margin-right: 1px;
    overflow: hidden;
}

/* Drop-down fields */
.select {
    display: flex;
    position: relative;
    flex: none;
    height: 16px;
    border: 1px solid #404040;
    box-shadow: inset 1px 1px #a2a2a2, inset -1px -1px #787878;
}

.select::after {
    content: "";
    position: absolute;
    top: 5px;
    right: 4px;
    border: 4px solid transparent;
    border-top: 5px solid #181818;
    pointer-events: none;
}

.select::before {
    content: "";
    position: absolute;
    top: 2px;
    right: 16px;
    bottom: 2px;
    border-left: 1px solid #666;
}

.select select {
    width: 100%;
    padding: 0 16px 0 5px;
    appearance: none;
    line-height: 14px;
}

.workspace {
    width: 138px;
    height: 18px;
    margin: 0 7px 0 6px;
}

.workspace::after {
    top: 6px;
}

.workspace select {
    line-height: 16px;
}

/* Search fields */
.search {
    display: flex;
    align-items: center;
    height: 18px;
    padding: 0 2px 0 3px;
    border: 1px solid #3b3b3b;
    background: #bdbdbd;
    font-family: "Open Sans", "Noto Sans", sans-serif;
}

.search svg {
    width: 15px;
    height: 14px;
}

.search input {
    flex: 1;
    min-width: 0;
    padding-left: 4px;
}

.help-search {
    flex: 1;
    min-width: 0;
}

.down {
    margin-left: 3px;
    border: 4px solid transparent;
    border-top: 5px solid #181818;
    border-bottom: 0;
}

/* Panels */
.upper {
    display: grid;
    grid-template-columns: 287px minmax(0, 1fr) 174px;
    gap: 3px;
    padding: 2px 0 4px;
}

.column,
.side {
    display: flex;
    flex-direction: column;
    min-width: 0;
    min-height: 0;
}

.strip {
    flex: none;
    height: 4px;
    margin: 0 3px 2px 1px;
    border-bottom: 1px solid #b0b0b0;
    background: #8b8b8b;
}

.strip-left {
    margin: 0 11px 2px 52px;
}

.panel {
    display: flex;
    flex-direction: column;
    min-height: 0;
    border: 1px solid #a8a8a8;
    background: #8b8b8b;
    overflow: hidden;
}

.column .panel {
    flex: 1;
}

.tabs {
    display: flex;
    flex: none;
    height: 19px;
    background: #737373;
    white-space: nowrap;
}

.tab {
    display: flex;
    flex: none;
    align-items: center;
    border-right: 1px solid #444;
    border-bottom: 1px solid #a8a8a8;
    color: #333;
}

.tab.current {
    gap: 4px;
    padding: 0 3px 0 2px;
    border-bottom: 0;
    background: #8b8b8b;
    color: #151515;
}

.tab.wide {
    flex: 1 1 auto;
    justify-content: center;
}

.column .tab.current {
    gap: 3px;
    padding: 0 2px 0 3px;
}

.x,
.tab-close {
    color: #333;
    font-size: 12px;
}

.panel-menu {
    display: grid;
    place-items: center;
    flex: none;
    width: 28px;
    margin-left: auto;
    border-bottom: 1px solid #a8a8a8;
}

.panel-menu svg {
    width: 16px;
    height: 10px;
}

.tab-end {
    display: grid;
    place-items: center;
    flex: none;
    width: 10px;
    border-left: 1px solid #444;
    border-bottom: 1px solid #a8a8a8;
}

.chip {
    flex: none;
    width: 11px;
    height: 11px;
    border-bottom: 1px solid #eee;
}

.chip.blue {
    background: #6878d0;
}

.chip.sand {
    background: #a5987a;
}

.lock {
    width: 14px;
    height: 14px;
}

.effect-select {
    width: 203px;
}

.comp-select {
    width: 140px;
}

.source-line {
    flex: none;
    height: 20px;
    padding: 2px 5px;
    border-bottom: 1px solid #5c5c5c;
}

.effect-body {
    display: flex;
    flex: 1;
    margin-bottom: 18px;
}

.effect-list {
    flex: 1;
}

.effect-row {
    display: flex;
    align-items: center;
    height: 17px;
    padding-left: 5px;
    border-bottom: 1px solid #747474;
}

.effect-row.child {
    padding-left: 22px;
}

.effect-row svg {
    width: 12px;
    height: 12px;
    margin: 0 3px 0 5px;
}

.effect-row b {
    flex: 0 0 123px;
}

.effect-row .effect-name {
    flex: 0 0 109px;
}

.effect-row .fx {
    width: 14px;
    margin: 0 2px 0 6px;
}

.twirl {
    flex: none;
    width: 9px;
    height: 9px;
    background: #4a4a4a;
    clip-path: polygon(20% 5%, 85% 50%, 20% 95%);
}

.twirl.open {
    clip-path: polygon(5% 20%, 95% 20%, 50% 85%);
}

.fx {
    font-family: "Liberation Serif", serif;
    font-size: 14px;
    font-weight: bold;
    line-height: 14px;
}

.scrollbar {
    flex: none;
    position: relative;
    width: 17px;
    border: 1px solid #565656;
    background: #7a7a7a;
}

.scrollbar::before,
.scrollbar::after {
    content: "";
    position: absolute;
    left: 3px;
    border: 5px solid transparent;
}

.scrollbar::before {
    top: 0;
    border-bottom: 6px solid #5e5e5e;
}

.scrollbar::after {
    bottom: 0;
    border-top: 6px solid #5e5e5e;
}

/* Composition viewer */
.crumbs {
    flex: none;
    height: 24px;
    padding: 3px 19px;
    border-bottom: 1px solid #5c5c5c;
}

.crumbs button {
    height: 16px;
    padding: 0 8px;
    border: 1px solid #3f3f3f;
    background: #757575;
    line-height: 14px;
}

.viewer {
    display: flex;
    flex: 1;
    justify-content: center;
    min-height: 0;
    padding-top: 16px;
}

.viewer svg {
    width: 80%;
    height: 100%;
    max-height: 240px;
    overflow: visible;
}

.viewer-bar {
    display: flex;
    flex: none;
    align-items: center;
    gap: 4px;
    height: 24px;
    padding-left: 2px;
    border-top: 1px solid #4d4d4d;
}

.icon-button {
    display: grid;
    place-items: center;
    flex: none;
    width: 18px;
    height: 17px;
}

.icon-button svg {
    width: 14px;
    height: 13px;
}

.pressed {
    border: 1px solid #333;
    background: #666;
}

.zoom-select {
    width: 66px;
}

.time-button {
    height: 16px;
    padding: 0 6px;
    border: 1px solid #404040;
    line-height: 14px;
}

.quality-select {
    width: 83px;
}

.camera-select {
    width: 103px;
}

.views-select {
    width: 90px;
}

/* Right column */
.side {
    gap: 4px;
}

.info {
    flex: 0 1 134px;
}

.info .tab.audio {
    padding: 0 16px 0 11px;
}

.side .tab.current {
    gap: 5px;
    padding-right: 3px;
}

.side .strip {
    width: 70%;
    margin: 0 1px -2px;
}

.info-body {
    display: flex;
    margin: 5px 8px 0;
    padding-bottom: 6px;
    border-bottom: 1px solid #666;
    line-height: 13px;
}

.info-color {
    width: 20px;
    height: 20px;
    margin-top: 12px;
    background: #000;
}

.channels {
    display: grid;
    grid-template-columns: 20px 47px;
    grid-auto-rows: 13px;
    margin-left: 5px;
    border-right: 1px solid #666;
}

.cross {
    width: 9px;
    height: 9px;
    margin: 19px 6px 0 8px;
}

.coords {
    flex: 1;
    text-align: right;
    white-space: nowrap;
}

.transport {
    display: flex;
    align-items: center;
    height: 28px;
    padding-left: 5px;
    overflow: hidden;
}

.transport button {
    flex: none;
    width: 24px;
    height: 16px;
    padding: 2px 5px;
}

.transport .flip {
    transform: scaleX(-1);
}

.transport .sound {
    margin: 0 2px 0 4px;
}

.transport svg {
    width: 14px;
    height: 12px;
}

.presets {
    flex: 1;
}

.preset-search {
    flex: none;
    margin: 3px 5px 3px;
}

.preset-search input {
    padding-left: 8px;
}

.clear {
    width: 12px;
    height: 12px;
    border-radius: 3px;
    background: #555;
    color: #eee;
    line-height: 12px;
}

.preset-body {
    display: flex;
    flex: 1;
    min-height: 0;
    border-top: 1px solid #555;
}

.preset-list {
    flex: 1;
    white-space: nowrap;
}

.preset-row {
    display: flex;
    align-items: center;
    gap: 3px;
    height: 17px;
    padding: 0 7px 0 4px;
    border-bottom: 1px solid #747474;
}

.preset-row.selected {
    justify-content: flex-end;
    gap: 4px;
}

.bit-icon {
    width: 12px;
    height: 10px;
    background: #222;
    color: #eee;
    font-size: 8px;
    line-height: 10px;
    text-align: center;
}

.preset-name {
    padding: 0 2px;
    background: #565656;
    color: #eee;
    line-height: 14px;
}

.preset-foot {
    display: flex;
    flex: none;
    justify-content: flex-end;
    height: 18px;
    padding: 3px 24px;
    border-top: 1px solid #555;
}

.preset-foot svg {
    width: 11px;
    height: 11px;
}

/* Timeline */
.timeline {
    display: flex;
    flex-direction: column;
    min-height: 0;
    margin-bottom: 1px;
    border: 1px solid #2d6f9e;
    background: #8b8b8b;
}

.timeline-tabs .tab,
.timeline-tabs .panel-menu,
.timeline-tabs .tab-end {
    border-bottom-color: #2075ae;
}

.timeline-tabs {
    background: linear-gradient(#737373 18px, #2075ae 18px);
}

.timeline-tabs .queue {
    padding: 0 16px 0 11px;
}

.timeline-tabs .source {
    gap: 4px;
    padding: 0 15px 0 12px;
}

.timeline-tabs .tab.current {
    gap: 3px;
    border: 1px solid #3a92d0;
    border-bottom: 0;
}

.timeline-body {
    display: grid;
    flex: 1;
    grid-template-columns: 658px minmax(0, 1fr);
    min-height: 0;
    padding-left: 1px;
}

.outline {
    display: flex;
    flex-direction: column;
    min-height: 0;
    border-right: 1px solid #555;
}

.outline-head {
    display: flex;
    flex: none;
    align-items: center;
    height: 37px;
    border-bottom: 1px solid #4a4a4a;
}

.timecode {
    display: flex;
    flex-direction: column;
    align-items: center;
    width: 105px;
    color: #1d4a90;
}

.timecode a {
    border-bottom: 1px dotted #1d4a90;
    font-family: "DejaVu Serif Condensed", "DejaVu Serif", serif;
    font-size: 15px;
    font-weight: bold;
    line-height: 15px;
}

.timecode small {
    font-size: 9px;
    line-height: 12px;
}

.layer-search {
    width: 273px;
}

.comp-switches {
    display: flex;
    align-items: center;
    margin-left: 11px;
}

.comp-switches button {
    display: grid;
    place-items: center;
    width: 26px;
    height: 24px;
}

.comp-switches svg {
    width: 19px;
    height: 18px;
}

.comp-switches .pressed {
    width: 24px;
    margin: 0 1px;
}

.comp-switches .flow {
    margin-right: 8px;
}

.comp-switches .flow svg {
    width: 24px;
    height: 14px;
}

.comp-switches .spaced {
    margin-left: 8px;
}

.row {
    display: grid;
    flex: none;
    align-items: center;
    height: 17px;
    border-bottom: 1px solid #6e6e6e;
    white-space: nowrap;
}

.layer-grid {
    grid-template-columns: 68px 32px 33px 170px 222px 1fr;
}

.tree-grid {
    grid-template-columns: 68px 235px 222px;
}

.column-head {
    height: 18px;
    border-color: #4a4a4a;
    font-family: "Open Sans", sans-serif;
    font-size: 9px;
}

.column-head > span + span {
    padding-left: 5px;
    border-left: 1px solid #666;
    line-height: 10px;
}

.layer-row {
    height: 18px;
    background: #7d7d7d;
}

.av {
    display: flex;
    align-items: center;
    padding-left: 4px;
}

.av svg,
.av .gap,
.av .box {
    width: 15px;
    height: 12px;
    padding: 1px;
}

.box {
    border: 1px solid #6d6d6d;
    border-bottom-color: #a4a4a4;
    border-right-color: #a4a4a4;
}

.eye {
    border-bottom: 1px solid #bbb;
}

.label-cell {
    display: flex;
    align-items: center;
    gap: 5px;
}

.label-cell svg {
    width: 16px;
    height: 13px;
    margin-left: 8px;
}

.label-cell .twirl {
    margin-left: 3px;
}

.label-color {
    width: 11px;
    height: 11px;
    background: #6b79d6;
}

.number {
    padding-left: 6px;
}

.layer-name {
    display: flex;
    align-items: center;
    align-self: stretch;
}

.layer-name svg {
    width: 12px;
    height: 12px;
    margin: 0 3px;
}

.layer-name b {
    flex: 1;
    padding-left: 3px;
    background: #535353;
    color: #f0f0f0;
    line-height: 17px;
}

.column-head > .switches {
    margin-left: -5px;
}

.switches {
    display: flex;
    align-items: center;
}

.layer-row .switches {
    padding-left: 1px;
}

.switches svg,
.switches .gap,
.switches .box {
    width: 14px;
    height: 14px;
    margin-right: 1px;
}

.switches svg.box {
    padding: 0;
}

.switches .fx {
    width: 14px;
    margin: 0 1px 0 0;
    line-height: 12px;
}

.parent {
    display: flex;
    align-items: center;
    gap: 6px;
    padding-left: 6px;
}

.parent svg {
    width: 12px;
    height: 12px;
}

.parent-select {
    width: 88px;
}

.depth-1,
.depth-2,
.depth-3 {
    display: flex;
    align-items: center;
    gap: 9px;
    padding-left: 20px;
}

.depth-2 {
    padding-left: 37px;
}

.depth-3 {
    padding-left: 54px;
}

.mode {
    display: flex;
    padding-left: 1px;
}

.mode .select {
    width: 139px;
    height: 14px;
}

.mode .select select {
    line-height: 12px;
}

.mode .select::after {
    top: 4px;
}

.path-buttons {
    gap: 2px;
}

.path-buttons button {
    width: 16px;
    height: 14px;
    border: 1px solid #333;
}

.path-buttons svg {
    width: 14px;
    height: 12px;
}

.add {
    display: flex;
    align-items: center;
    justify-content: flex-end;
    gap: 3px;
    padding-right: 4px;
}

.add svg {
    width: 12px;
    height: 12px;
}

.outline-foot {
    display: flex;
    align-items: center;
    height: 19px;
    margin-top: auto;
    padding: 0 0 1px 3px;
    border-top: 1px solid #4a4a4a;
}

.toggle-modes {
    flex: 1;
    height: 15px;
    margin-left: 244px;
    padding-right: 129px;
    border: 1px solid #333;
    font-family: "Open Sans", sans-serif;
    font-size: 9px;
    line-height: 13px;
}

/* Time ruler and tracks */
.time-area {
    display: flex;
    min-width: 0;
    min-height: 0;
}

.tracks-column {
    display: flex;
    flex: 1;
    flex-direction: column;
    position: relative;
    padding-top: 6px;
}

.navigator,
.work-area {
    display: flex;
    flex: none;
    justify-content: space-between;
    height: 10px;
    border: 1px solid #333;
    border-radius: 6px 6px 0 0;
    background: #bdbdba;
    overflow: hidden;
}

.work-area {
    height: 17px;
    border-radius: 0;
    background: #c2c2c2;
}

.navigator span,
.work-area span {
    width: 7px;
    border: 1px solid #14405e;
    background: #2089c8;
}

.ruler {
    display: grid;
    grid-template-columns: 51fr 88fr 88fr 88fr 15fr;
    flex: none;
    height: 20px;
    font-family: "Open Sans", sans-serif;
    font-size: 10px;
    line-height: 15px;
    text-align: center;
}

.ruler span {
    background: linear-gradient(#333, #333) center bottom / 1px 4px no-repeat;
}

.ruler span:first-child {
    background: none;
    text-align: left;
}

.track {
    flex: none;
    height: 17px;
    margin-right: 8px;
    border-bottom: 1px solid #686868;
    background: #7b7b7b;
}

.bar-track {
    height: 20px;
    padding: 3px 0 1px 8px;
    border-top: 1px solid #777;
}

.layer-bar {
    height: 15px;
    background: #4a5ccd;
}

.track-rest {
    flex: 1;
    margin-right: 8px;
    background: #7a7a7a;
}

.hscroll {
    flex: none;
    position: relative;
    height: 18px;
    border: 1px solid #555;
    background: #7a7a7a;
}

.hscroll::after {
    content: "";
    position: absolute;
    top: 3px;
    right: 2px;
    border: 5px solid transparent;
    border-left: 6px solid #5a5a5a;
    border-right: 0;
}

.playhead {
    position: absolute;
    top: 19px;
    left: 1px;
    width: 14px;
    height: 54px;
}

.time-side {
    display: flex;
    flex-direction: column;
    align-items: center;
    width: 17px;
    padding: 37px 0 18px;
    border-left: 1px solid #666;
}

.time-side svg {
    width: 14px;
    height: 14px;
    margin-bottom: 7px;
}

.time-side .scrollbar {
    flex: 1;
    width: 16px;
}

/* Popup menu */
.popup {
    position: absolute;
    top: 523px;
    left: 531px;
    width: 262px;
    padding: 2px 3px 20px;
    border: 1px solid #d8d8d8;
    background: linear-gradient(90deg, #f0f0f0 29px, #dedede 29px 30px, #fff 30px 31px, #efefef 31px);
    box-shadow: 3px 3px 3px rgba(0, 0, 0, 0.5);
    font-family: "Open Sans", sans-serif;
    font-size: 12px;
    list-style: none;
}

.popup li {
    height: 22px;
}

.popup .divider {
    height: 30px;
    padding-top: 8px;
    background: linear-gradient(#dcdcdc 1px, #fff 1px) 28px 3px / 100% 2px no-repeat;
}

.popup button {
    display: block;
    width: 100%;
    height: 22px;
    padding-left: 31px;
    line-height: 20px;
    text-align: left;
}

.cursor {
    position: absolute;
    top: 568px;
    left: 493px;
    width: 14px;
    height: 20px;
    filter: drop-shadow(2px 2px 1px rgba(0, 0, 0, 0.4));
}

/* Watermark */
.watermark {
    display: flex;
    position: absolute;
    top: 668px;
    left: 733px;
    pointer-events: none;
}

.watermark svg {
    width: 60px;
    height: 52px;
}

.wing-edge,
.wing-line {
    fill: none;
    stroke: #8c8c8c;
    stroke-width: 4px;
    stroke-linecap: round;
    stroke-linejoin: round;
}

.wing-line {
    stroke: #f6f6f6;
    stroke-width: 2px;
}

.watermark span {
    margin: 40px 0 0 -9px;
    color: #c4c4c4;
    font-family: "Liberation Sans", sans-serif;
    font-size: 24px;
    font-weight: bold;
    line-height: 24px;
    text-shadow: 0 0 2px #444, 1px 1px 1px #444;
}
```
